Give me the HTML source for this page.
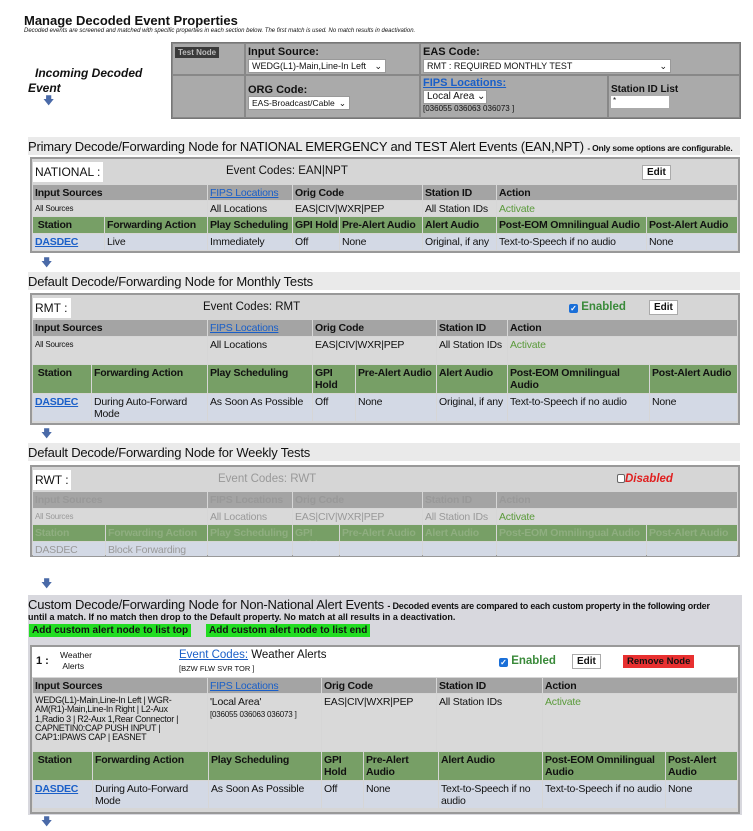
<!DOCTYPE html>
<html><head><meta charset="utf-8"><style>
*{box-sizing:border-box;margin:0;padding:0}
body{width:753px;height:831px;background:#fff;font-family:"Liberation Sans",sans-serif;position:relative;overflow:hidden;color:#111}
.a{position:absolute;white-space:nowrap}
.c{position:absolute;font-size:10.5px;padding:2px 2px;line-height:12px;letter-spacing:-0.2px;overflow:hidden}
.h{background:#a4a4a4;font-weight:bold}
.d{background:#d9d9d9}
.g{background:#779f66;font-weight:bold}
.b{background:#d3d9e5}
.lk{color:#1a5fc8;text-decoration:underline}
.act{color:#5a9a3a}
.box{position:absolute;border:2px solid #999;background:#d6d6d6}
.sec{position:absolute;background:#eaeaea;font-size:13px;letter-spacing:-0.2px;padding:2px 0 0 0;white-space:nowrap}
.arr{position:absolute;color:#4a6aa8;font-size:11px;line-height:11px}
.btn{position:absolute;background:#fff;border:1px solid #aaa;font-size:10px;font-weight:bold;padding:1px 4px}
.sel{position:absolute;background:#fff;border:1px solid #999;font-size:9px;padding:1px 3px;line-height:10px;white-space:nowrap;overflow:hidden}
.w{position:absolute;background:#fff}
.dis{color:#999}
</style></head><body>
<div class="a" style="left:24px;top:13px;font-size:13px;font-weight:bold">Manage Decoded Event Properties</div>
<div class="a" style="left:24px;top:28px;font-size:6px;font-style:italic">Decoded events are screened and matched with specific properties in each section below. The first match is used. No match results in deactivation.</div>

<div class="a" style="left:35px;top:66px;font-size:12px;font-weight:bold;font-style:italic">Incoming Decoded</div>
<div class="a" style="left:28px;top:81px;font-size:12px;font-weight:bold;font-style:italic">Event</div>
<div class="arr" style="left:43px;top:96px">&#129095;</div>

<div class="a" style="left:171px;top:42px;width:570px;height:77px;background:#aaa;border:1px solid #777"></div>
<div class="a" style="left:172px;top:43px;width:73px;height:32px;border:1px solid #888"></div>
<div class="a" style="left:175px;top:47px;background:#3a3a3a;color:#bbb;font-size:8px;font-weight:bold;padding:1px 3px">Test Node</div>
<div class="a" style="left:245px;top:43px;width:175px;height:32px;border:1px solid #888"></div>
<div class="a" style="left:420px;top:43px;width:320px;height:32px;border:1px solid #888"></div>
<div class="a" style="left:172px;top:75px;width:73px;height:43px;border:1px solid #888"></div>
<div class="a" style="left:245px;top:75px;width:175px;height:43px;border:1px solid #888"></div>
<div class="a" style="left:420px;top:75px;width:188px;height:43px;border:1px solid #888"></div>
<div class="a" style="left:608px;top:75px;width:132px;height:43px;border:1px solid #888"></div>
<div class="a" style="left:248px;top:46px;font-size:11px;font-weight:bold">Input Source:</div>
<div class="sel" style="left:248px;top:59px;width:138px">WEDG(L1)-Main,Line-In Left <span style="float:right">&#8964;</span></div>
<div class="a" style="left:423px;top:46px;font-size:11px;font-weight:bold">EAS Code:</div>
<div class="sel" style="left:423px;top:59px;width:248px">RMT : REQUIRED MONTHLY TEST <span style="float:right">&#8964;</span></div>
<div class="a" style="left:248px;top:84px;font-size:11px;font-weight:bold">ORG Code:</div>
<div class="sel" style="left:248px;top:96px;width:102px;font-size:8.5px">EAS-Broadcast/Cable <span style="float:right">&#8964;</span></div>
<div class="a lk" style="left:423px;top:77px;font-size:11px;font-weight:bold">FIPS Locations:</div>
<div class="sel" style="left:423px;top:90px;width:64px;font-size:10px">Local Area &#8964;</div>
<div class="a" style="left:423px;top:104px;font-size:8px">[036055 036063 036073 ]</div>
<div class="a" style="left:611px;top:84px;font-size:10px;font-weight:bold">Station ID List</div>
<div class="w" style="left:611px;top:96px;width:58px;height:12px;font-size:8px;padding-left:2px">*</div>

<!-- Section 1 -->
<div class="sec" style="left:28px;top:137px;width:712px;height:18px">Primary Decode/Forwarding Node for NATIONAL EMERGENCY and TEST Alert Events (EAN,NPT) <span style="font-size:8.5px;font-weight:bold">- Only some options are configurable.</span></div>
<div class="box" style="left:30px;top:157px;width:710px;height:96px"></div>
<div class="w" style="left:33px;top:162px;width:70px;height:20px;font-size:12px;padding:3px 2px">NATIONAL :</div>
<div class="a" style="left:226px;top:165px;font-size:11.5px">Event Codes: EAN|NPT</div>
<div class="btn" style="left:642px;top:165px">Edit</div>
<div class="c h" style="left:33px;top:185px;width:174px;height:15px">Input Sources</div>
<div class="c h" style="left:208px;top:185px;width:84px;height:15px"><span class="lk" style="font-weight:normal">FIPS Locations</span></div>
<div class="c h" style="left:293px;top:185px;width:129px;height:15px">Orig Code</div>
<div class="c h" style="left:423px;top:185px;width:73px;height:15px">Station ID</div>
<div class="c h" style="left:497px;top:185px;width:240px;height:15px">Action</div>
<div class="c d" style="left:33px;top:201px;width:174px;height:15px;font-size:8px">All Sources</div>
<div class="c d" style="left:208px;top:201px;width:84px;height:15px">All Locations</div>
<div class="c d" style="left:293px;top:201px;width:129px;height:15px">EAS|CIV|WXR|PEP</div>
<div class="c d" style="left:423px;top:201px;width:73px;height:15px">All Station IDs</div>
<div class="c d act" style="left:497px;top:201px;width:240px;height:15px">Activate</div>
<div class="c g" style="left:33px;top:217px;width:71px;height:16px">&nbsp;Station</div>
<div class="c g" style="left:105px;top:217px;width:102px;height:16px">Forwarding Action</div>
<div class="c g" style="left:208px;top:217px;width:84px;height:16px">Play Scheduling</div>
<div class="c g" style="left:293px;top:217px;width:46px;height:16px;white-space:nowrap">GPI Hold</div>
<div class="c g" style="left:340px;top:217px;width:82px;height:16px">Pre-Alert Audio</div>
<div class="c g" style="left:423px;top:217px;width:73px;height:16px">Alert Audio</div>
<div class="c g" style="left:497px;top:217px;width:149px;height:16px">Post-EOM Omnilingual Audio</div>
<div class="c g" style="left:647px;top:217px;width:90px;height:16px">Post-Alert Audio</div>
<div class="c b" style="left:33px;top:234px;width:71px;height:16px"><span class="lk" style="font-weight:bold">DASDEC</span></div>
<div class="c b" style="left:105px;top:234px;width:102px;height:16px">Live</div>
<div class="c b" style="left:208px;top:234px;width:84px;height:16px">Immediately</div>
<div class="c b" style="left:293px;top:234px;width:46px;height:16px">Off</div>
<div class="c b" style="left:340px;top:234px;width:82px;height:16px">None</div>
<div class="c b" style="left:423px;top:234px;width:73px;height:16px">Original, if any</div>
<div class="c b" style="left:497px;top:234px;width:149px;height:16px">Text-to-Speech if no audio</div>
<div class="c b" style="left:647px;top:234px;width:90px;height:16px">None</div>
<div class="arr" style="left:41px;top:258px">&#129095;</div>

<!-- Section 2 -->
<div class="sec" style="left:28px;top:272px;width:712px;height:18px">Default Decode/Forwarding Node for Monthly Tests</div>
<div class="box" style="left:30px;top:293px;width:710px;height:132px"></div>
<div class="w" style="left:33px;top:298px;width:38px;height:20px;font-size:12px;padding:3px 2px">RMT :</div>
<div class="a" style="left:203px;top:301px;font-size:11.5px">Event Codes: RMT</div>
<div class="a" style="left:569px;top:301px;font-size:11.5px;color:#3a8a3a;font-weight:bold"><span style="display:inline-block;width:9px;height:9px;background:#1a6fd8;border-radius:2px;color:#fff;font-size:8px;line-height:9px;text-align:center;vertical-align:-1px">✓</span> Enabled</div>
<div class="btn" style="left:649px;top:300px">Edit</div>
<div class="c h" style="left:33px;top:320px;width:174px;height:16px">Input Sources</div>
<div class="c h" style="left:208px;top:320px;width:104px;height:16px"><span class="lk" style="font-weight:normal">FIPS Locations</span></div>
<div class="c h" style="left:313px;top:320px;width:123px;height:16px">Orig Code</div>
<div class="c h" style="left:437px;top:320px;width:70px;height:16px">Station ID</div>
<div class="c h" style="left:508px;top:320px;width:229px;height:16px">Action</div>
<div class="c d" style="left:33px;top:337px;width:174px;height:27px;font-size:8px">All Sources</div>
<div class="c d" style="left:208px;top:337px;width:104px;height:27px">All Locations</div>
<div class="c d" style="left:313px;top:337px;width:123px;height:27px">EAS|CIV|WXR|PEP</div>
<div class="c d" style="left:437px;top:337px;width:70px;height:27px">All Station IDs</div>
<div class="c d act" style="left:508px;top:337px;width:229px;height:27px">Activate</div>
<div class="c g" style="left:33px;top:365px;width:58px;height:28px">&nbsp;Station</div>
<div class="c g" style="left:92px;top:365px;width:115px;height:28px">Forwarding Action</div>
<div class="c g" style="left:208px;top:365px;width:104px;height:28px">Play Scheduling</div>
<div class="c g" style="left:313px;top:365px;width:42px;height:28px">GPI Hold</div>
<div class="c g" style="left:356px;top:365px;width:80px;height:28px">Pre-Alert Audio</div>
<div class="c g" style="left:437px;top:365px;width:70px;height:28px">Alert Audio</div>
<div class="c g" style="left:508px;top:365px;width:141px;height:28px">Post-EOM Omnilingual Audio</div>
<div class="c g" style="left:650px;top:365px;width:87px;height:28px">Post-Alert Audio</div>
<div class="c b" style="left:33px;top:394px;width:58px;height:27px"><span class="lk" style="font-weight:bold">DASDEC</span></div>
<div class="c b" style="left:92px;top:394px;width:115px;height:27px">During Auto-Forward Mode</div>
<div class="c b" style="left:208px;top:394px;width:104px;height:27px">As Soon As Possible</div>
<div class="c b" style="left:313px;top:394px;width:42px;height:27px">Off</div>
<div class="c b" style="left:356px;top:394px;width:80px;height:27px">None</div>
<div class="c b" style="left:437px;top:394px;width:70px;height:27px">Original, if any</div>
<div class="c b" style="left:508px;top:394px;width:141px;height:27px">Text-to-Speech if no audio</div>
<div class="c b" style="left:650px;top:394px;width:87px;height:27px">None</div>
<div class="arr" style="left:41px;top:429px">&#129095;</div>

<!-- Section 3 -->
<div class="sec" style="left:28px;top:443px;width:712px;height:18px">Default Decode/Forwarding Node for Weekly Tests</div>
<div class="box" style="left:30px;top:465px;width:710px;height:92px"></div>
<div class="w" style="left:33px;top:470px;width:38px;height:20px;font-size:12px;padding:3px 2px">RWT :</div>
<div class="a dis" style="left:218px;top:473px;font-size:11.5px">Event Codes: RWT</div>
<div class="a" style="left:617px;top:473px;font-size:11.5px;color:#e02020;font-style:italic;font-weight:bold"><span style="display:inline-block;width:8px;height:9px;background:#fff;border:1px solid #666;border-radius:2px;vertical-align:-1px"></span>Disabled</div>
<div class="c h dis" style="left:33px;top:492px;width:174px;height:16px">Input Sources</div>
<div class="c h dis" style="left:208px;top:492px;width:84px;height:16px">FIPS Locations</div>
<div class="c h dis" style="left:293px;top:492px;width:129px;height:16px">Orig Code</div>
<div class="c h dis" style="left:423px;top:492px;width:73px;height:16px">Station ID</div>
<div class="c h dis" style="left:497px;top:492px;width:240px;height:16px">Action</div>
<div class="c d dis" style="left:33px;top:509px;width:174px;height:15px;font-size:8px">All Sources</div>
<div class="c d dis" style="left:208px;top:509px;width:84px;height:15px">All Locations</div>
<div class="c d dis" style="left:293px;top:509px;width:129px;height:15px">EAS|CIV|WXR|PEP</div>
<div class="c d dis" style="left:423px;top:509px;width:73px;height:15px">All Station IDs</div>
<div class="c d act" style="left:497px;top:509px;width:240px;height:15px">Activate</div>
<div class="c g" style="left:33px;top:525px;width:72px;height:16px;color:#8fae80">Station</div>
<div class="c g" style="left:106px;top:525px;width:101px;height:16px;color:#8fae80">Forwarding Action</div>
<div class="c g" style="left:208px;top:525px;width:84px;height:16px;color:#8fae80">Play Scheduling</div>
<div class="c g" style="left:293px;top:525px;width:46px;height:16px;color:#8fae80">GPI Hold</div>
<div class="c g" style="left:340px;top:525px;width:82px;height:16px;color:#8fae80">Pre-Alert Audio</div>
<div class="c g" style="left:423px;top:525px;width:73px;height:16px;color:#8fae80">Alert Audio</div>
<div class="c g" style="left:497px;top:525px;width:149px;height:16px;color:#8fae80">Post-EOM Omnilingual Audio</div>
<div class="c g" style="left:647px;top:525px;width:90px;height:16px;color:#8fae80">Post-Alert Audio</div>
<div class="c b dis" style="left:33px;top:542px;width:72px;height:14px">DASDEC</div>
<div class="c b dis" style="left:106px;top:542px;width:101px;height:14px">Block Forwarding</div>
<div class="c b" style="left:208px;top:542px;width:84px;height:14px"></div>
<div class="c b" style="left:293px;top:542px;width:46px;height:14px"></div>
<div class="c b" style="left:340px;top:542px;width:82px;height:14px"></div>
<div class="c b" style="left:423px;top:542px;width:73px;height:14px"></div>
<div class="c b" style="left:497px;top:542px;width:149px;height:14px"></div>
<div class="c b" style="left:647px;top:542px;width:90px;height:14px"></div>
<div class="arr" style="left:41px;top:579px">&#129095;</div>

<!-- Section 4 -->
<div class="a" style="left:28px;top:595px;width:714px;height:220px;background:#d8d8de"></div>
<div class="a" style="left:28px;top:597px;font-size:13px;letter-spacing:-0.2px">Custom Decode/Forwarding Node for Non-National Alert Events <span style="font-size:9px;font-weight:bold">- Decoded events are compared to each custom property in the following order</span></div>
<div class="a" style="left:28px;top:612px;font-size:9px;font-weight:bold">until a match. If no match then drop to the Default property. No match at all results in a deactivation.</div>
<div class="a" style="left:29px;top:624px;background:#22dd22;font-size:10px;font-weight:bold;padding:1px 3px">Add custom alert node to list top</div>
<div class="a" style="left:206px;top:624px;background:#22dd22;font-size:10px;font-weight:bold;padding:1px 3px">Add custom alert node to list end</div>
<div class="box" style="left:30px;top:645px;width:710px;height:169px"></div>
<div class="w" style="left:32px;top:647px;width:706px;height:30px"></div>
<div class="a" style="left:36px;top:655px;font-size:11px;font-weight:bold">1 :</div>
<div class="a" style="left:60px;top:650px;font-size:8.5px;line-height:11px">Weather<br>&nbsp;Alerts</div>
<div class="a" style="left:179px;top:649px;font-size:11.5px"><span class="lk">Event Codes:</span> Weather Alerts</div>
<div class="a" style="left:179px;top:664px;font-size:7.5px">[BZW FLW SVR TOR ]</div>
<div class="a" style="left:499px;top:655px;font-size:11.5px;color:#3a8a3a;font-weight:bold"><span style="display:inline-block;width:9px;height:9px;background:#1a6fd8;border-radius:2px;color:#fff;font-size:8px;line-height:9px;text-align:center;vertical-align:-1px">✓</span> Enabled</div>
<div class="btn" style="left:572px;top:654px">Edit</div>
<div class="a" style="left:623px;top:655px;background:#e83030;font-size:9.5px;font-weight:bold;padding:1px 4px;color:#111">Remove Node</div>
<div class="c h" style="left:33px;top:678px;width:174px;height:15px">Input Sources</div>
<div class="c h" style="left:208px;top:678px;width:113px;height:15px"><span class="lk" style="font-weight:normal">FIPS Locations</span></div>
<div class="c h" style="left:322px;top:678px;width:114px;height:15px">Orig Code</div>
<div class="c h" style="left:437px;top:678px;width:105px;height:15px">Station ID</div>
<div class="c h" style="left:543px;top:678px;width:194px;height:15px">Action</div>
<div class="c d" style="left:33px;top:694px;width:174px;height:57px;font-size:9px;line-height:9.3px;letter-spacing:-0.3px;padding-right:14px">WEDG(L1)-Main,Line-In Left | WGR-AM(R1)-Main,Line-In Right | L2-Aux 1,Radio 3 | R2-Aux 1,Rear Connector | CAPNETIN0:CAP PUSH INPUT | CAP1:IPAWS CAP | EASNET</div>
<div class="c d" style="left:208px;top:694px;width:113px;height:57px">'Local Area'<br><span style="font-size:8px">[036055 036063 036073 ]</span></div>
<div class="c d" style="left:322px;top:694px;width:114px;height:57px">EAS|CIV|WXR|PEP</div>
<div class="c d" style="left:437px;top:694px;width:105px;height:57px">All Station IDs</div>
<div class="c d act" style="left:543px;top:694px;width:194px;height:57px">Activate</div>
<div class="c g" style="left:33px;top:752px;width:59px;height:28px">&nbsp;Station</div>
<div class="c g" style="left:93px;top:752px;width:115px;height:28px">Forwarding Action</div>
<div class="c g" style="left:209px;top:752px;width:112px;height:28px">Play Scheduling</div>
<div class="c g" style="left:322px;top:752px;width:41px;height:28px">GPI Hold</div>
<div class="c g" style="left:364px;top:752px;width:74px;height:28px">Pre-Alert Audio</div>
<div class="c g" style="left:439px;top:752px;width:103px;height:28px">Alert Audio</div>
<div class="c g" style="left:543px;top:752px;width:122px;height:28px">Post-EOM Omnilingual Audio</div>
<div class="c g" style="left:666px;top:752px;width:71px;height:28px">Post-Alert Audio</div>
<div class="c b" style="left:33px;top:781px;width:59px;height:27px"><span class="lk" style="font-weight:bold">DASDEC</span></div>
<div class="c b" style="left:93px;top:781px;width:115px;height:27px">During Auto-Forward Mode</div>
<div class="c b" style="left:209px;top:781px;width:112px;height:27px">As Soon As Possible</div>
<div class="c b" style="left:322px;top:781px;width:41px;height:27px">Off</div>
<div class="c b" style="left:364px;top:781px;width:74px;height:27px">None</div>
<div class="c b" style="left:439px;top:781px;width:103px;height:27px">Text-to-Speech if no audio</div>
<div class="c b" style="left:543px;top:781px;width:122px;height:27px">Text-to-Speech if no audio</div>
<div class="c b" style="left:666px;top:781px;width:71px;height:27px">None</div>
<div class="arr" style="left:41px;top:817px">&#129095;</div>
</body></html>
